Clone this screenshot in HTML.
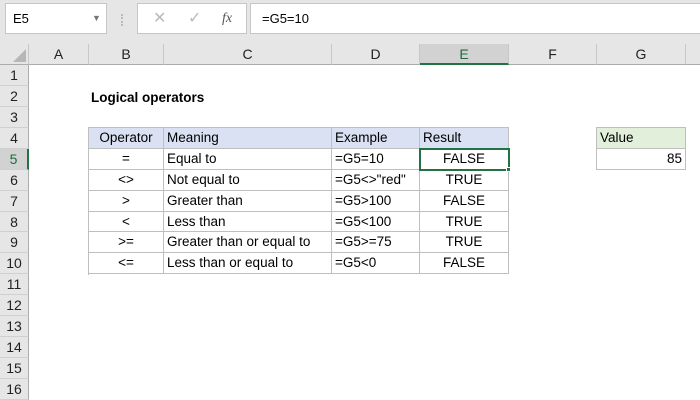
<!DOCTYPE html><html><head><style>
body{margin:0;width:700px;height:400px;overflow:hidden;background:#fff;font-family:"Liberation Sans",sans-serif;font-size:13px;color:#000;position:relative}
div{position:absolute;box-sizing:border-box}
.tb{left:0;top:0;width:700px;height:44px;background:#e6e6e6}
.box{background:#fff;border:1px solid #c6c6c6;top:3px;height:31px}
.ch{top:44px;height:21px;background:#e6e6e6;border-right:1px solid #c8c8c8;border-bottom:1px solid #ababab;text-align:center;line-height:21px;font-size:14px;color:#222}
.rh{left:0;width:29px;background:#e6e6e6;border-right:1px solid #ababab;border-bottom:1px solid #d0d0d0;text-align:center;font-size:14px;color:#222}
.c{border-right:1px solid #bfbfbf;border-bottom:1px solid #bfbfbf;padding:0 3px;white-space:nowrap;line-height:20px;font-size:13.5px}
</style></head><body>
<div class="tb"></div>
<div class="box" style="left:5px;width:102px;padding-left:7px;line-height:29px;font-size:13px">E5<span style="position:absolute;left:86px;top:0;font-size:9px;color:#777">▼</span></div>
<div style="left:121px;top:14px;width:3px;height:12px;border-left:2px dotted #bbb"></div>
<div class="box" style="left:137px;width:110px;color:#bbb;font-size:16px;line-height:29px"><span style="position:absolute;left:15px">✕</span><span style="position:absolute;left:50px">✓</span><span style="position:absolute;left:84px;color:#555;font-family:'Liberation Serif',serif;font-style:italic;font-size:14px">fx</span></div>
<div class="box" style="left:250px;width:460px;padding-left:11px;line-height:29px">=G5=10</div>
<div class="ch" style="left:0;width:29px"><svg width="29" height="21" style="position:absolute;left:0;top:0"><polygon points="26,5 26,18 13,18" fill="#b7b7b7"/></svg></div>
<div class="ch" style="left:29px;width:60px">A</div>
<div class="ch" style="left:89px;width:75px">B</div>
<div class="ch" style="left:164px;width:168px">C</div>
<div class="ch" style="left:332px;width:88px">D</div>
<div class="ch" style="left:420px;width:89px;background:#d2d2d2;border-bottom:2px solid #217346;color:#1e6b3f">E</div>
<div class="ch" style="left:509px;width:88px">F</div>
<div class="ch" style="left:597px;width:89px">G</div>
<div class="ch" style="left:686px;width:20px"></div>
<div style="left:0;top:65px;width:29px;height:335px;background:#e6e6e6;border-right:1px solid #ababab"></div>
<div class="rh" style="top:65px;height:20.93px;line-height:21px">1</div>
<div class="rh" style="top:85.93px;height:20.93px;line-height:21px">2</div>
<div class="rh" style="top:106.86px;height:20.93px;line-height:21px">3</div>
<div class="rh" style="top:127.79px;height:20.93px;line-height:21px">4</div>
<div class="rh" style="top:148.72px;height:20.93px;line-height:21px;background:#d2d2d2;border-right:2px solid #217346;color:#1e6b3f">5</div>
<div class="rh" style="top:169.65px;height:20.93px;line-height:21px">6</div>
<div class="rh" style="top:190.58px;height:20.93px;line-height:21px">7</div>
<div class="rh" style="top:211.51px;height:20.93px;line-height:21px">8</div>
<div class="rh" style="top:232.44px;height:20.93px;line-height:21px">9</div>
<div class="rh" style="top:253.37px;height:20.93px;line-height:21px">10</div>
<div class="rh" style="top:274.3px;height:20.93px;line-height:21px">11</div>
<div class="rh" style="top:295.23px;height:20.93px;line-height:21px">12</div>
<div class="rh" style="top:316.16px;height:20.93px;line-height:21px">13</div>
<div class="rh" style="top:337.09px;height:20.93px;line-height:21px">14</div>
<div class="rh" style="top:358.02px;height:20.93px;line-height:21px">15</div>
<div class="rh" style="top:378.95px;height:20.93px;line-height:21px">16</div>
<div style="left:91px;top:88px;font-weight:bold;font-size:13.5px;line-height:20px">Logical operators</div>
<!-- table -->
<div style="left:88px;top:127px;width:421px;height:148px;border-left:1px solid #bfbfbf;border-top:1px solid #bfbfbf"></div>
<div class="c" style="left:89px;top:128px;width:75px;height:20.72px;background:#d9e1f2;text-align:center">Operator</div>
<div class="c" style="left:164px;top:128px;width:168px;height:20.72px;background:#d9e1f2">Meaning</div>
<div class="c" style="left:332px;top:128px;width:88px;height:20.72px;background:#d9e1f2">Example</div>
<div class="c" style="left:420px;top:128px;width:89px;height:20.72px;background:#d9e1f2">Result</div>

<div class="c" style="left:89px;top:148.72px;width:75px;height:20.93px;text-align:center">=</div>
<div class="c" style="left:164px;top:148.72px;width:168px;height:20.93px">Equal to</div>
<div class="c" style="left:332px;top:148.72px;width:88px;height:20.93px">=G5=10</div>
<div class="c" style="left:420px;top:148.72px;width:89px;height:20.93px;text-align:center">FALSE</div>

<div class="c" style="left:89px;top:169.65px;width:75px;height:20.93px;text-align:center">&lt;&gt;</div>
<div class="c" style="left:164px;top:169.65px;width:168px;height:20.93px">Not equal to</div>
<div class="c" style="left:332px;top:169.65px;width:88px;height:20.93px">=G5&lt;&gt;"red"</div>
<div class="c" style="left:420px;top:169.65px;width:89px;height:20.93px;text-align:center">TRUE</div>

<div class="c" style="left:89px;top:190.58px;width:75px;height:20.93px;text-align:center">&gt;</div>
<div class="c" style="left:164px;top:190.58px;width:168px;height:20.93px">Greater than</div>
<div class="c" style="left:332px;top:190.58px;width:88px;height:20.93px">=G5&gt;100</div>
<div class="c" style="left:420px;top:190.58px;width:89px;height:20.93px;text-align:center">FALSE</div>

<div class="c" style="left:89px;top:211.51px;width:75px;height:20.93px;text-align:center">&lt;</div>
<div class="c" style="left:164px;top:211.51px;width:168px;height:20.93px">Less than</div>
<div class="c" style="left:332px;top:211.51px;width:88px;height:20.93px">=G5&lt;100</div>
<div class="c" style="left:420px;top:211.51px;width:89px;height:20.93px;text-align:center">TRUE</div>

<div class="c" style="left:89px;top:232.44px;width:75px;height:20.93px;text-align:center">&gt;=</div>
<div class="c" style="left:164px;top:232.44px;width:168px;height:20.93px">Greater than or equal to</div>
<div class="c" style="left:332px;top:232.44px;width:88px;height:20.93px">=G5&gt;=75</div>
<div class="c" style="left:420px;top:232.44px;width:89px;height:20.93px;text-align:center">TRUE</div>

<div class="c" style="left:89px;top:253.37px;width:75px;height:20.93px;text-align:center">&lt;=</div>
<div class="c" style="left:164px;top:253.37px;width:168px;height:20.93px">Less than or equal to</div>
<div class="c" style="left:332px;top:253.37px;width:88px;height:20.93px">=G5&lt;0</div>
<div class="c" style="left:420px;top:253.37px;width:89px;height:20.93px;text-align:center">FALSE</div>

<div style="left:419px;top:147.5px;width:91px;height:23px;border:2px solid #217346"></div>
<div style="left:506px;top:167px;width:5px;height:5px;background:#217346;border:1px solid #fff"></div>

<div style="left:596px;top:127px;width:90px;height:43px;border-left:1px solid #bfbfbf;border-top:1px solid #bfbfbf"></div>
<div class="c" style="left:597px;top:128px;width:89px;height:20.72px;background:#e2efda">Value</div>
<div class="c" style="left:597px;top:148.72px;width:89px;height:20.93px;text-align:right">85</div>
</body></html>
